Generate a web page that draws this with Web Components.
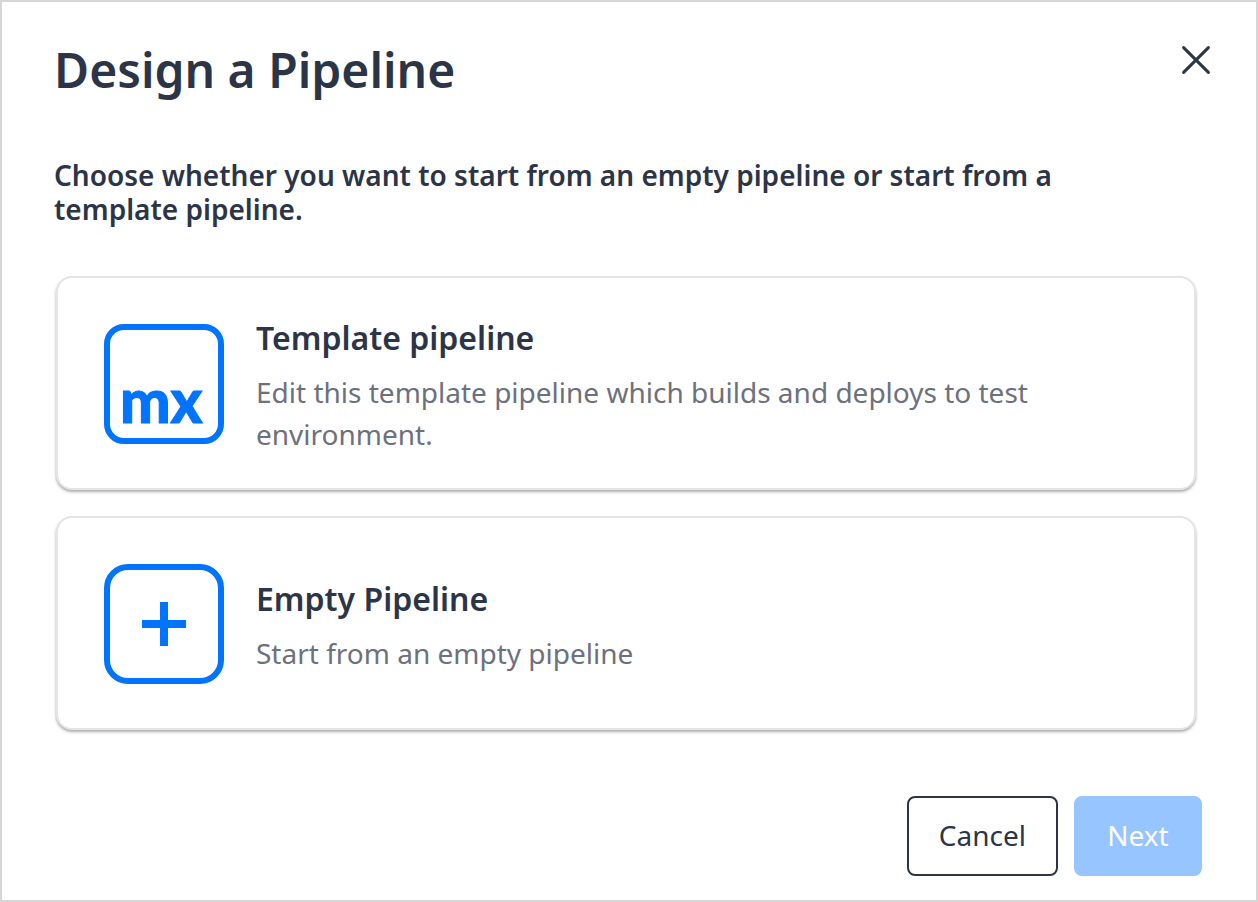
<!DOCTYPE html>
<html lang="en">
<head>
<meta charset="utf-8">
<meta name="viewport" content="width=device-width, initial-scale=1">
<title>Design a Pipeline</title>
<style>
  html, body { margin: 0; min-height: 100%; background: #fff; }
  body { font-family: "Noto Sans", "Open Sans", sans-serif; color: #2c3547; }
</style>
</head>
<body>
<pipeline-dialog>
  <span slot="title">Design a Pipeline</span>
  <span slot="intro">Choose whether you want to start from an empty pipeline or start from a template pipeline.</span>
  <option-card>
    <mx-icon slot="icon"></mx-icon>
    <span slot="title">Template pipeline</span>
    <span slot="text">Edit this template pipeline which builds and deploys to test environment.</span>
  </option-card>
  <option-card>
    <plus-icon slot="icon"></plus-icon>
    <span slot="title">Empty Pipeline</span>
    <span slot="text">Start from an empty pipeline</span>
  </option-card>
  <action-button slot="actions">Cancel</action-button>
  <action-button slot="actions" primary disabled>Next</action-button>
</pipeline-dialog>

<script>
class BaseElement extends HTMLElement {
  constructor() {
    super();
    this.attachShadow({ mode: "open" }).innerHTML =
      `<style>*, *::before { box-sizing: border-box; }</style>` + this.render();
  }
}

customElements.define("mx-icon", class extends BaseElement {
  render() {
    return `<style>:host { display: block; } svg { display: block; }</style>
      <svg width="120" height="120" viewBox="0 0 120 120">
        <rect x="3" y="3" width="114" height="114" rx="17" fill="none" stroke="#0073ff" stroke-width="6"/>
        <text x="16" y="99" font-family="Lato, Liberation Sans, sans-serif" font-weight="900" font-size="60" fill="#0073ff" stroke="#0073ff">mx</text>
      </svg>`;
  }
});

customElements.define("plus-icon", class extends BaseElement {
  render() {
    return `<style>:host { display: block; } svg { display: block; }</style>
      <svg width="120" height="120" viewBox="0 0 120 120" aria-hidden="true">
        <rect x="3" y="3" width="114" height="114" rx="21" fill="none" stroke="#0073ff" stroke-width="6"/>
        <path d="M60 38v44M38 60h44" stroke="#0073ff" stroke-width="8"/>
      </svg>`;
  }
});

customElements.define("option-card", class extends BaseElement {
  render() {
    return `<style>
        :host { display: block; }
        button {
          display: flex; align-items: center; gap: 32px;
          width: 100%; min-height: 214px; padding: 32px 46px;
          border: 2px solid #e5e5e5; border-radius: 16px; background: #fff;
          box-shadow: 0 2px 3px rgba(0, 0, 0, .32);
          font: inherit; color: inherit; text-align: left; cursor: pointer;
        }
        .icon { flex: none; padding-top: 2px; }
        .body { display: flex; flex-direction: column; gap: 6px; min-width: 0; max-width: 820px; }
        .title { font-size: 32px; line-height: 54px; font-weight: 600; }
        .text { font-size: 28px; line-height: 42px; color: #6c717e; }
      </style>
      <button type="button">
        <span class="icon"><slot name="icon"></slot></span>
        <span class="body">
          <span class="title"><slot name="title"></slot></span>
          <span class="text"><slot name="text"></slot></span>
        </span>
      </button>`;
  }
});

customElements.define("action-button", class extends BaseElement {
  render() {
    return `<style>
        :host { display: block; }
        button {
          height: 80px; min-width: 128px; padding: 0 30px 2px;
          border: 2px solid #2c3547; border-radius: 8px; background: #fff;
          font: inherit; font-size: 28px; line-height: 42px; color: #2c3547; cursor: pointer;
        }
        :host([primary]) button { border-color: #97c5ff; background: #97c5ff; color: #fff; }
        button:disabled { cursor: default; }
      </style>
      <button type="button"><slot></slot></button>`;
  }
  connectedCallback() {
    this.shadowRoot.querySelector("button").disabled = this.hasAttribute("disabled");
  }
});

customElements.define("close-button", class extends BaseElement {
  render() {
    return `<style>
        :host { display: block; }
        button { display: block; padding: 0; border: 0; background: none; color: inherit; cursor: pointer; }
        svg { display: block; }
      </style>
      <button type="button" aria-label="Close">
        <svg width="32" height="32" viewBox="0 0 32 32" fill="none" stroke="currentColor" stroke-width="3" stroke-linecap="round">
          <path d="M3.600 3.600L28.400 28.400M28.400 3.600L3.600 28.400"/>
        </svg>
      </button>`;
  }
});

customElements.define("pipeline-dialog", class extends BaseElement {
  render() {
    return `<style>
        :host {
          display: flex; flex-direction: column; box-sizing: border-box;
          min-height: 100vh; padding: 36px 44px 24px 52px; border: 2px solid #d6d6d6;
        }
        header { display: flex; justify-content: space-between; align-items: flex-start; }
        close-button { margin-top: 6px; }
        h1 { margin: 0; font-size: 48px; line-height: 64px; font-weight: 600; }
        .intro { margin: 56px 100px 0 0; font-size: 28px; line-height: 34px; font-weight: 600; }
        .options { display: flex; flex-direction: column; gap: 26px; margin: 50px 16px 0 2px; }
        footer { display: flex; justify-content: flex-end; gap: 16px; margin: auto 10px 0 0; padding-top: 48px; }
      </style>
      <header>
        <h1><slot name="title"></slot></h1>
        <close-button></close-button>
      </header>
      <p class="intro"><slot name="intro"></slot></p>
      <main class="options"><slot></slot></main>
      <footer><slot name="actions"></slot></footer>`;
  }
});
</script>
</body>
</html>
